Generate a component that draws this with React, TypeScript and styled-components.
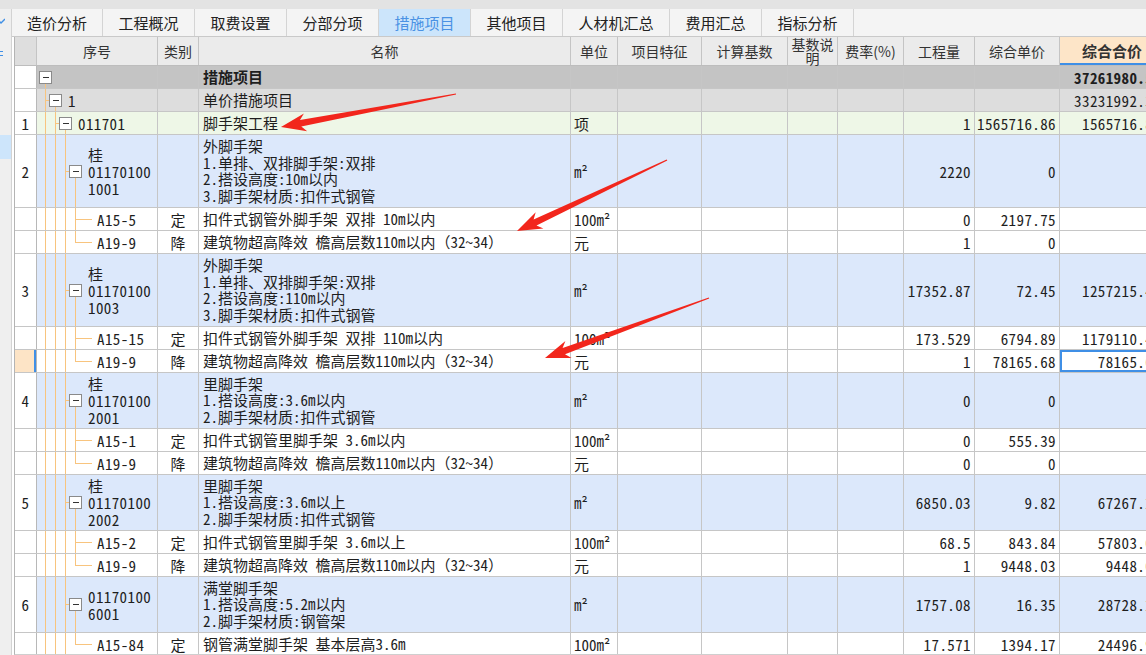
import React from 'react';
import styled, { createGlobalStyle } from 'styled-components';

const UI_FONT = `"Noto Sans CJK SC", "Noto Sans", sans-serif`;
const DATA_FONT = `"Noto Sans Mono CJK SC", "Noto Sans CJK SC", "Liberation Mono", monospace`;
const COLS = '22px 121px 41px 372px 47px 84px 86px 50px 66px 71px 85px 105px';
const GUIDE = '#f8c47e';
const LINE = '#c6c6c6';

type Tone = 'top' | 'sub' | 'green' | 'blue' | 'white';
type Tree = { kind: 'node'; level: number } | { kind: 'leaf'; last?: boolean };

interface Item {
  no?: string;
  tree: Tree;
  code: string[];
  cat?: string;
  name: string[];
  unit?: string;
  qty?: string;
  price?: string;
  total?: string;
  tone: Tone;
  h: number;
  bold?: boolean;
  selected?: boolean;
}

const toneBg: Record<Tone, string> = {
  top: '#c4c4c4',
  sub: '#dddddd',
  green: '#eef7e7',
  blue: '#dce8fb',
  white: '#ffffff',
};

const GlobalStyle = createGlobalStyle`
  html, body {
    margin: 0;
    padding: 0;
    background: #ffffff;
    overflow: hidden;
  }
`;

const Page = styled.div`
  position: relative;
  width: 1146px;
  height: 655px;
  overflow: hidden;
  display: flex;
  flex-direction: column;
  background: #ffffff;
`;

const TopStrip = styled.div`
  flex: none;
  height: 9px;
  background: #e3e3e3;
`;

const Body = styled.div`
  flex: 1;
  min-height: 0;
  display: flex;
`;

const SideStrip = styled.div`
  flex: none;
  width: 11px;
  background: #efefef;
  border-right: 1px solid #d3d3d3;
  display: flex;
  flex-direction: column;
  overflow: hidden;
`;

const SideMark = styled.svg<{ $top: number }>`
  display: block;
  flex: none;
  margin-top: ${({ $top }) => $top}px;
`;

const SideHighlight = styled.div`
  flex: none;
  margin-top: 78px;
  height: 24px;
  background: #cde5fb;
`;

const Main = styled.div`
  flex: 1;
  min-width: 0;
  display: flex;
  flex-direction: column;
`;

const TabBar = styled.div`
  flex: none;
  height: 27px;
  display: flex;
  background: #f4f4f4;
  border-bottom: 1px solid #c9c9c9;
`;

const Tab = styled.div<{ $w: number; $active?: boolean }>`
  width: ${({ $w }) => $w}px;
  flex: none;
  box-sizing: border-box;
  border-right: 1px solid #d4d4d4;
  display: flex;
  align-items: center;
  justify-content: center;
  font-family: ${UI_FONT};
  font-size: 15px;
  color: ${({ $active }) => ($active ? '#4a92e4' : '#222222')};
  background: ${({ $active }) => ($active ? '#cce5fb' : 'transparent')};
`;

const GridWrap = styled.div`
  flex: 1;
  min-height: 0;
  margin-left: 2px;
  border-left: 1px solid #b4b4b4;
  border-bottom: 1px solid #cfcfcf;
  overflow: hidden;
`;

const HeadRow = styled.div`
  display: grid;
  grid-template-columns: ${COLS};
  height: 29px;
  box-sizing: border-box;
  background: #ebebeb;
  border-bottom: 1px solid #bdbdbd;
`;

const HeadCell = styled.div<{ $corner?: boolean; $accent?: boolean }>`
  box-sizing: border-box;
  border-right: 1px solid #c4c4c4;
  display: flex;
  align-items: center;
  justify-content: center;
  text-align: center;
  font-family: ${UI_FONT};
  font-size: ${({ $accent }) => ($accent ? 15 : 14)}px;
  font-weight: ${({ $accent }) => ($accent ? 700 : 400)};
  line-height: 14px;
  color: #333333;
  background: ${({ $corner, $accent }) => ($corner ? '#dedede' : $accent ? '#fde5c8' : 'transparent')};
  box-shadow: ${({ $accent }) => ($accent ? 'inset 0 -2px 0 #3f8fe6' : 'none')};
`;

const Row = styled.div<{ $h: number; $tone: Tone }>`
  display: grid;
  grid-template-columns: ${COLS};
  height: ${({ $h }) => $h}px;
  box-sizing: border-box;
  background: ${({ $tone }) => toneBg[$tone]};
  border-bottom: 1px solid ${LINE};
  font-family: ${DATA_FONT};
  font-size: 15px;
  color: #1e1e1e;
`;

const RowHead = styled.div<{ $selected?: boolean }>`
  box-sizing: border-box;
  border-right: 1px solid #b8b8b8;
  display: flex;
  align-items: center;
  justify-content: center;
  letter-spacing: 0.4px;
  background: ${({ $selected }) => ($selected ? '#fde4c6' : '#ffffff')};
  box-shadow: ${({ $selected }) => ($selected ? 'inset -2px 0 0 #3f8fe6' : 'none')};
`;

const Cell = styled.div<{ $align?: 'left' | 'center' | 'right'; $bold?: boolean; $selected?: boolean }>`
  box-sizing: border-box;
  border-right: 1px solid ${LINE};
  display: flex;
  align-items: center;
  justify-content: ${({ $align }) =>
    $align === 'right' ? 'flex-end' : $align === 'center' ? 'center' : 'flex-start'};
  padding: 0 3px;
  white-space: nowrap;
  overflow: hidden;
  letter-spacing: ${({ $align }) => ($align === 'right' ? '0.4px' : 'normal')};
  font-weight: ${({ $bold }) => ($bold ? 700 : 400)};
  box-shadow: ${({ $selected }) => ($selected ? 'inset 0 0 0 2px #3f8fe6' : 'none')};
`;

const SeqCell = styled.div`
  box-sizing: border-box;
  border-right: 1px solid ${LINE};
  display: flex;
  align-items: stretch;
  overflow: hidden;
  white-space: nowrap;
`;

const SeqText = styled.div`
  display: flex;
  flex-direction: column;
  justify-content: center;
  line-height: 17px;
  padding-left: 1px;
  letter-spacing: 0.4px;
`;

const NameCell = styled.div<{ $bold?: boolean }>`
  box-sizing: border-box;
  border-right: 1px solid ${LINE};
  display: flex;
  flex-direction: column;
  justify-content: center;
  padding-left: 4px;
  line-height: 16.5px;
  white-space: nowrap;
  overflow: hidden;
  font-family: ${({ $bold }) => ($bold ? UI_FONT : DATA_FONT)};
  font-weight: ${({ $bold }) => ($bold ? 700 : 400)};
`;

const Overlay = styled.svg`
  position: absolute;
  left: 0;
  top: 0;
  pointer-events: none;
`;

const tabs = [
  { label: '造价分析', w: 91 },
  { label: '工程概况', w: 92 },
  { label: '取费设置', w: 92 },
  { label: '分部分项', w: 92 },
  { label: '措施项目', w: 92, active: true },
  { label: '其他项目', w: 92 },
  { label: '人材机汇总', w: 107 },
  { label: '费用汇总', w: 92 },
  { label: '指标分析', w: 92 },
];

const heads = ['序号', '类别', '名称', '单位', '项目特征', '计算基数', '基数说明', '费率(%)', '工程量', '综合单价'];

const WALK = '建筑物超高降效 檐高层数110m以内（32~34）';
const node = (level: number): Tree => ({ kind: 'node', level });
const leaf: Tree = { kind: 'leaf' };
const leafLast: Tree = { kind: 'leaf', last: true };

const rows: Item[] = [
  { tree: node(0), code: [], name: ['措施项目'], total: '37261980.54', tone: 'top', h: 23, bold: true },
  { tree: node(1), code: ['1'], name: ['单价措施项目'], total: '33231992.31', tone: 'sub', h: 23 },
  { no: '1', tree: node(2), code: ['011701'], name: ['脚手架工程'], unit: '项', qty: '1', price: '1565716.86', total: '1565716.86', tone: 'green', h: 23 },
  {
    no: '2', tree: node(3), code: ['桂', '01170100', '1001'],
    name: ['外脚手架', '1.单排、双排脚手架:双排', '2.搭设高度:10m以内', '3.脚手架材质:扣件式钢管'],
    unit: 'm²', qty: '2220', price: '0', tone: 'blue', h: 73,
  },
  { tree: leaf, code: ['A15-5'], cat: '定', name: ['扣件式钢管外脚手架 双排 10m以内'], unit: '100m²', qty: '0', price: '2197.75', tone: 'white', h: 23 },
  { tree: leafLast, code: ['A19-9'], cat: '降', name: [WALK], unit: '元', qty: '1', price: '0', tone: 'white', h: 23 },
  {
    no: '3', tree: node(3), code: ['桂', '01170100', '1003'],
    name: ['外脚手架', '1.单排、双排脚手架:双排', '2.搭设高度:110m以内', '3.脚手架材质:扣件式钢管'],
    unit: 'm²', qty: '17352.87', price: '72.45', total: '1257215.43', tone: 'blue', h: 73,
  },
  { tree: leaf, code: ['A15-15'], cat: '定', name: ['扣件式钢管外脚手架 双排 110m以内'], unit: '100m²', qty: '173.529', price: '6794.89', total: '1179110.47', tone: 'white', h: 23 },
  { tree: leafLast, code: ['A19-9'], cat: '降', name: [WALK], unit: '元', qty: '1', price: '78165.68', total: '78165.68', tone: 'white', h: 23, selected: true },
  {
    no: '4', tree: node(3), code: ['桂', '01170100', '2001'],
    name: ['里脚手架', '1.搭设高度:3.6m以内', '2.脚手架材质:扣件式钢管'],
    unit: 'm²', qty: '0', price: '0', tone: 'blue', h: 56,
  },
  { tree: leaf, code: ['A15-1'], cat: '定', name: ['扣件式钢管里脚手架 3.6m以内'], unit: '100m²', qty: '0', price: '555.39', tone: 'white', h: 23 },
  { tree: leafLast, code: ['A19-9'], cat: '降', name: [WALK], unit: '元', qty: '0', price: '0', tone: 'white', h: 23 },
  {
    no: '5', tree: node(3), code: ['桂', '01170100', '2002'],
    name: ['里脚手架', '1.搭设高度:3.6m以上', '2.脚手架材质:扣件式钢管'],
    unit: 'm²', qty: '6850.03', price: '9.82', total: '67267.29', tone: 'blue', h: 56,
  },
  { tree: leaf, code: ['A15-2'], cat: '定', name: ['扣件式钢管里脚手架 3.6m以上'], unit: '100m²', qty: '68.5', price: '843.84', total: '57803.04', tone: 'white', h: 23 },
  { tree: leafLast, code: ['A19-9'], cat: '降', name: [WALK], unit: '元', qty: '1', price: '9448.03', total: '9448.03', tone: 'white', h: 23 },
  {
    no: '6', tree: node(3), code: ['01170100', '6001'],
    name: ['满堂脚手架', '1.搭设高度:5.2m以内', '2.脚手架材质:钢管架'],
    unit: 'm²', qty: '1757.08', price: '16.35', total: '28728.26', tone: 'blue', h: 56,
  },
  { tree: leafLast, code: ['A15-84'], cat: '定', name: ['钢管满堂脚手架 基本层高3.6m'], unit: '100m²', qty: '17.571', price: '1394.17', total: '24496.96', tone: 'white', h: 23 },
];

// orange guide lines + collapse box for the tree column
const TreeGuides: React.FC<{ tree: Tree; h: number }> = ({ tree, h }) => {
  const H = h - 1;
  const mid = Math.floor(H / 2) + 0.5;
  const parts: React.ReactNode[] = [];
  const depth = tree.kind === 'leaf' ? 4 : tree.level;
  for (let k = 0; k < depth; k++) {
    const x = 8.5 + 10 * k;
    if (tree.kind === 'leaf' && k === 3) {
      parts.push(<line key={`v${k}`} x1={x} y1={0} x2={x} y2={tree.last ? mid : H} stroke={GUIDE} />);
      parts.push(<line key="branch" x1={x} y1={mid} x2={x + 16} y2={mid} stroke={GUIDE} />);
    } else {
      parts.push(<line key={`v${k}`} x1={x} y1={0} x2={x} y2={H} stroke={GUIDE} />);
    }
  }
  let width = 59;
  if (tree.kind === 'node') {
    const L = tree.level;
    const bx = 2 + 10 * L;
    const top = Math.floor(H / 2) - 6;
    width = 20 + 10 * L;
    if (L > 0) parts.push(<line key="in" x1={bx - 4} y1={mid} x2={bx} y2={mid} stroke={GUIDE} />);
    parts.push(<line key="down" x1={bx + 6.5} y1={top + 13} x2={bx + 6.5} y2={H} stroke={GUIDE} />);
    parts.push(<rect key="box" x={bx + 0.5} y={top + 0.5} width={12} height={12} fill="#ffffff" stroke="#8a8a8a" />);
    parts.push(<line key="minus" x1={bx + 3.5} y1={top + 6.5} x2={bx + 10} y2={top + 6.5} stroke="#333333" />);
  }
  return (
    <svg width={width} height={H} style={{ flex: 'none' }} shapeRendering="crispEdges">
      {parts}
    </svg>
  );
};

function arrowPoints(x1: number, y1: number, x2: number, y2: number) {
  const dx = x2 - x1;
  const dy = y2 - y1;
  const len = Math.hypot(dx, dy);
  const ux = dx / len;
  const uy = dy / len;
  const nx = -uy;
  const ny = ux;
  const head = 25;
  const wing = 9;
  const neck = 3.4;
  const tail = 0.6;
  const bx = x2 - ux * head;
  const by = y2 - uy * head;
  const sx = x2 - ux * (head - 5);
  const sy = y2 - uy * (head - 5);
  const p = (x: number, y: number) => `${x.toFixed(1)},${y.toFixed(1)}`;
  return [
    p(x1 + nx * tail, y1 + ny * tail),
    p(sx + nx * neck, sy + ny * neck),
    p(bx + nx * wing, by + ny * wing),
    p(x2, y2),
    p(bx - nx * wing, by - ny * wing),
    p(sx - nx * neck, sy - ny * neck),
    p(x1 - nx * tail, y1 - ny * tail),
  ].join(' ');
}

const arrows = [
  [456, 94, 281, 127],
  [667, 160, 517, 231],
  [709, 298, 545, 358],
];

export default function App() {
  return (
    <>
      <GlobalStyle />
      <Page>
        <TopStrip />
        <Body>
          <SideStrip>
            <SideMark $top={9} width={5} height={7}>
              <polyline points="-3,1 1,5 5,1" fill="none" stroke="#3f8fe6" strokeWidth={1.4} />
            </SideMark>
            <SideMark $top={25} width={4} height={7}>
              <line x1={0} y1={1.5} x2={3} y2={1.5} stroke="#3f8fe6" />
              <line x1={0} y1={5.5} x2={3} y2={5.5} stroke="#3f8fe6" />
            </SideMark>
            <SideHighlight />
          </SideStrip>
          <Main>
            <TabBar>
              {tabs.map((t) => (
                <Tab key={t.label} $w={t.w} $active={t.active}>
                  {t.label}
                </Tab>
              ))}
            </TabBar>
            <GridWrap>
              <HeadRow>
                <HeadCell $corner />
                {heads.map((h) => (
                  <HeadCell key={h}>{h === '基数说明' ? <span>基数说<br />明</span> : h}</HeadCell>
                ))}
                <HeadCell $accent>综合合价</HeadCell>
              </HeadRow>
              {rows.map((r, i) => (
                <Row key={i} $h={r.h} $tone={r.tone}>
                  <RowHead $selected={r.selected}>{r.no}</RowHead>
                  <SeqCell>
                    <TreeGuides tree={r.tree} h={r.h} />
                    <SeqText>
                      {r.code.map((c, j) => (
                        <div key={j}>{c}</div>
                      ))}
                    </SeqText>
                  </SeqCell>
                  <Cell $align="center">{r.cat}</Cell>
                  <NameCell $bold={r.bold}>
                    {r.name.map((n, j) => (
                      <div key={j}>{n}</div>
                    ))}
                  </NameCell>
                  <Cell>{r.unit}</Cell>
                  <Cell />
                  <Cell />
                  <Cell />
                  <Cell />
                  <Cell $align="right">{r.qty}</Cell>
                  <Cell $align="right">{r.price}</Cell>
                  <Cell $align="right" $bold={r.bold} $selected={r.selected}>
                    {r.total}
                  </Cell>
                </Row>
              ))}
            </GridWrap>
          </Main>
        </Body>
        <Overlay width={1146} height={655}>
          {arrows.map(([a, b, c, d], i) => (
            <polygon key={i} points={arrowPoints(a, b, c, d)} fill="#f2261c" />
          ))}
        </Overlay>
      </Page>
    </>
  );
}
